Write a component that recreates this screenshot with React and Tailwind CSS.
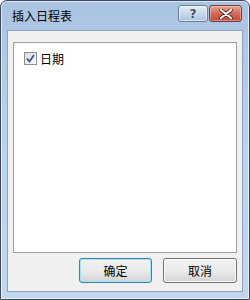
export default function App() {
  const cjk = { fontFamily: '"Noto Sans CJK SC", "Microsoft YaHei", sans-serif' }

  return (
    <div className="w-[250px] h-[300px] bg-white" style={cjk}>
      <div className="w-[250px] h-[300px] rounded-t-[7px] border border-[#3c4a5c] bg-gradient-to-b from-[#a9c3e2] via-[#bcd3ec] to-[#c2d7ee] flex flex-col px-[6px] pb-[7px] shadow-[inset_0_0_0_1px_rgba(255,255,255,0.6)]">
        {/* title bar */}
        <div className="h-[29px] flex items-center shrink-0">
          <span className="pl-[5px] text-[12px] text-black leading-none">插入日程表</span>
          <div className="ml-auto flex gap-[1px] mt-[-4px] mr-[1px]">
            <div className="w-[30px] h-[17px] rounded-[3px] border border-[#6d7f97] bg-gradient-to-b from-[#e1ecf7] via-[#c6d8ec] to-[#aec4de] flex items-center justify-center shadow-[inset_0_0_0_1px_rgba(255,255,255,0.5)]">
              <span className="text-[12px] font-bold text-[#3d4c60] leading-none" style={{ fontFamily: '"DejaVu Sans", sans-serif', textShadow: '0 0 2px #fff' }}>?</span>
            </div>
            <div className="w-[33px] h-[17px] rounded-[3px] border border-[#7a3a34] bg-gradient-to-b from-[#e8a493] via-[#d46a55] to-[#c2493a] flex items-center justify-center shadow-[inset_0_0_0_1px_rgba(255,255,255,0.35)]">
              <svg width="14" height="10" viewBox="0 0 14 10">
                <path d="M2 1 L12 9 M12 1 L2 9" stroke="#4a1f1a" strokeWidth="3.6" strokeLinecap="round" />
                <path d="M2 1 L12 9 M12 1 L2 9" stroke="#ffffff" strokeWidth="2.2" strokeLinecap="round" />
              </svg>
            </div>
          </div>
        </div>

        {/* client area */}
        <div className="flex-1 bg-[#f0f0f0] border border-[#8da3bd] flex flex-col px-[5px] pt-[11px] pb-[7px]">
          <div className="h-[211px] bg-white border border-[#a0a0a0] px-[10px] pt-[9px]">
            <label className="flex items-center gap-[3px]">
              <span className="w-[13px] h-[13px] border border-[#8e8f8f] bg-gradient-to-br from-[#dcdcdc] to-[#f8f8f8] flex items-center justify-center">
                <svg width="9" height="9" viewBox="0 0 9 9">
                  <path d="M1 4.5 L3.5 7.5 L8 1" fill="none" stroke="#3a5a9c" strokeWidth="1.8" />
                </svg>
              </span>
              <span className="text-[12px] text-black leading-none">日期</span>
            </label>
          </div>

          <div className="flex justify-end gap-[11px] mt-[5px]">
            <button className="w-[73px] h-[25px] rounded-[3px] border border-[#3c7fb1] bg-gradient-to-b from-[#f2f2f2] via-[#ebebeb] to-[#d3d3d3] shadow-[inset_0_0_0_1px_#9fe4fc] text-[12px] text-black leading-none">
              确定
            </button>
            <button className="w-[74px] h-[25px] rounded-[3px] border border-[#707070] bg-gradient-to-b from-[#f2f2f2] via-[#ebebeb] to-[#d3d3d3] shadow-[inset_0_0_0_1px_#fcfcfc] text-[12px] text-black leading-none">
              取消
            </button>
          </div>
        </div>
      </div>
    </div>
  )
}
